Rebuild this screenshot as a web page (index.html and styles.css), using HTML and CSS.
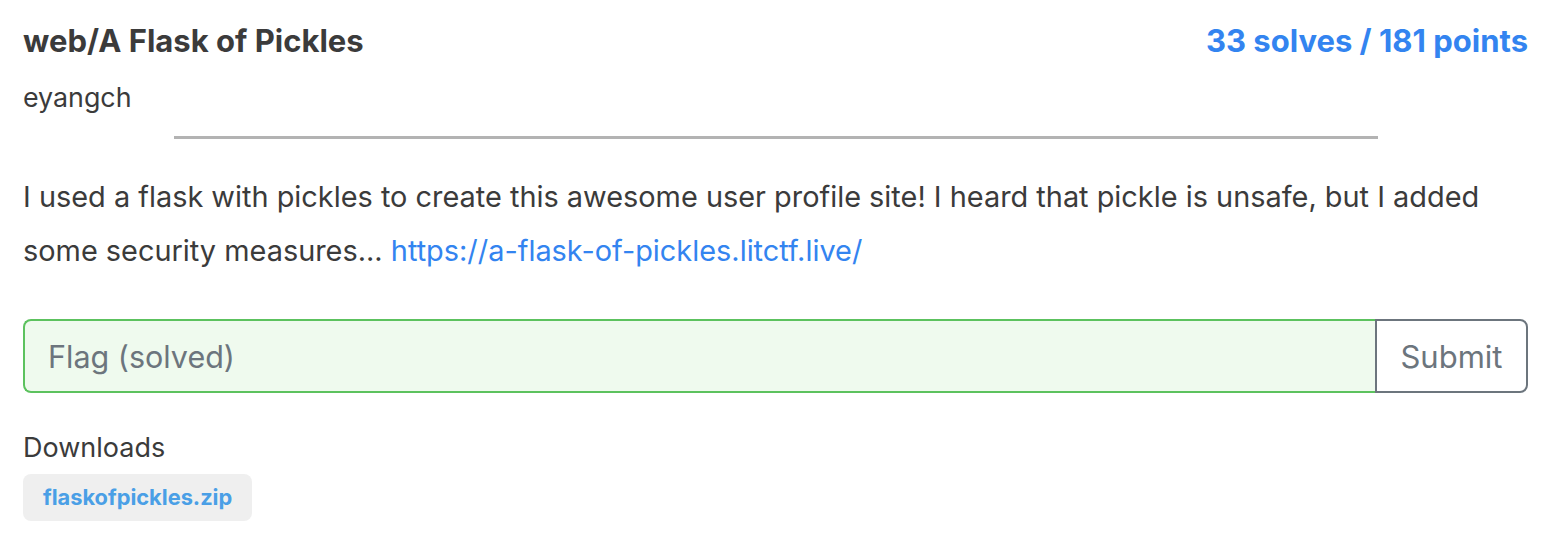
FILE: index.html
```html
<!DOCTYPE html>
<html>
<head>
<meta charset="utf-8">
<link rel="stylesheet" href="styles.css">
</head>
<body>
<div class="card">
  <div class="head">
    <div class="title">web/A Flask of Pickles</div>
    <div class="stats">33 solves / 181 points</div>
  </div>
  <div class="author">eyangch</div>
  <hr class="rule">
  <p class="desc">I used a flask with pickles to create this awesome user profile site! I heard that pickle is unsafe, but I added some security measures... <a href="#">https://a-flask-of-pickles.litctf.live/</a></p>
  <form class="flag">
    <input class="flag-input" type="text" placeholder="Flag (solved)">
    <button class="submit" type="button">Submit</button>
  </form>
  <div class="dl-label">Downloads</div>
  <a class="file" href="#">flaskofpickles.zip</a>
</div>
</body>
</html>
```
FILE: styles.css
```css
html, body {
  margin: 0;
  padding: 0;
  background: #fff;
}
body {
  font-family: Inter, "Noto Sans", sans-serif;
  color: #3b3b3b;
}
.card {
  padding: 22px 22px 0 23px;
}
.head {
  display: flex;
  justify-content: space-between;
  align-items: baseline;
}
.title {
  font-size: 31px;
  line-height: 38px;
  font-weight: 700;
  color: #3b3b3b;
}
.stats {
  font-size: 31px;
  line-height: 38px;
  font-weight: 700;
  color: #3384f0;
}
.author {
  margin-top: 21px;
  font-size: 26.8px;
  line-height: 32px;
}
.rule {
  width: 80%;
  margin: 23px auto 0;
  border: 0;
  border-top: 3px solid #b3b3b3;
}
.desc {
  margin: 31px 0 0;
  font-size: 28.9px;
  line-height: 54px;
}
.desc a {
  color: #3384f0;
  text-decoration: none;
}
.flag {
  display: flex;
  margin-top: 41px;
  height: 74px;
}
.flag-input {
  flex: 1;
  box-sizing: border-box;
  height: 74px;
  border: 2px solid #5cc25e;
  border-right: 0;
  border-radius: 8px 0 0 8px;
  background: #effaee;
  padding: 0 23px;
  font: inherit;
  font-size: 30.5px;
  color: #6c757d;
  outline: none;
}
.flag-input::placeholder {
  color: #6c757d;
}
.submit {
  box-sizing: border-box;
  width: 153px;
  height: 74px;
  border: 2px solid #6c757d;
  border-radius: 0 8px 8px 0;
  background: #fff;
  font: inherit;
  font-size: 31px;
  color: #6c757d;
  padding: 0;
}
.dl-label {
  margin-top: 39px;
  font-size: 27px;
  line-height: 32px;
}
.file {
  display: inline-block;
  margin-top: 10px;
  padding: 10px 20px;
  line-height: 27px;
  background: #efefef;
  border-radius: 8px;
  font-size: 21.8px;
  font-weight: 700;
  color: #4a9fe6;
  text-decoration: none;
}
```
